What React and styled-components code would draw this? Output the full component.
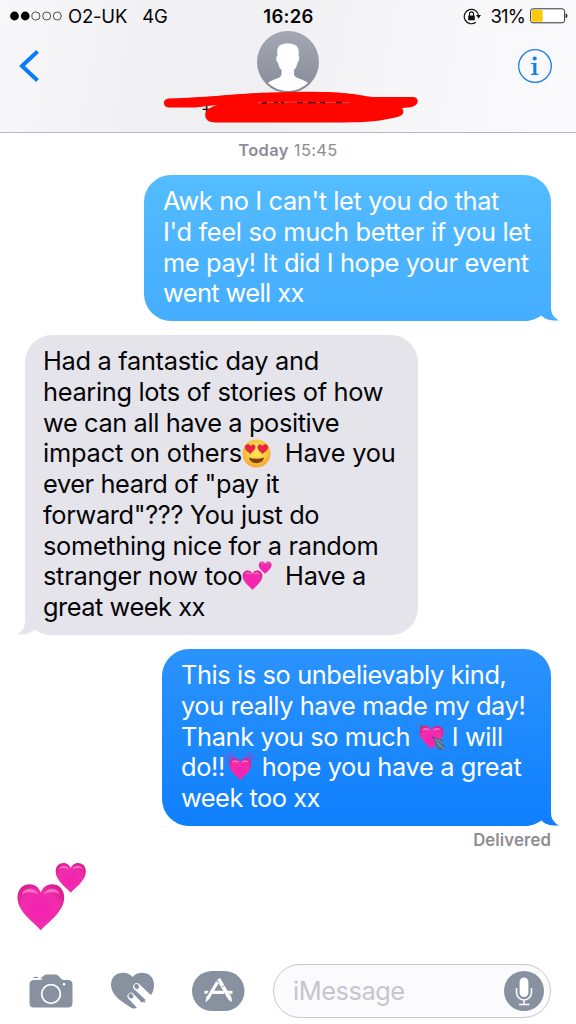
import { useId } from "react";
import styled, { createGlobalStyle, css } from "styled-components";

const GlobalStyle = createGlobalStyle`
    * {
        box-sizing: border-box;
    }

    body {
        margin: 0;
        background-color: #fff;
        font-family: Inter, "Liberation Sans", sans-serif;
        color: #050508;
    }

    svg {
        display: block;
        flex-shrink: 0;
    }
`
const Screen = styled.div`
    width: 576px;
    height: 1024px;
    display: flex;
    flex-direction: column;
    overflow: hidden;
    background-color: #fff;
`
const Header = styled.header`
    position: relative;
    height: 133px;
    border-bottom: 1px solid #b9b8bc;
    background: linear-gradient(100deg, #f8f7fa 0%, #f0eff2 28%, #f0eff2 48%, #f7f6f9 72%, #faf9fb 100%);
`
const StatusBar = styled.div`
    height: 31px;
    display: grid;
    grid-template-columns: 1fr auto 1fr;
    align-items: center;
    padding: 1px 8px 0 9px;
    font-size: 18.5px;
`
const Carrier = styled.div`
    display: flex;
    align-items: center;

    span {
        margin-left: 6px;
        letter-spacing: -0.2px;
    }

    span + span {
        margin-left: 15px;
    }
`
const Clock = styled.div`
    font-size: 18.5px;
    font-weight: 600;
    letter-spacing: 0.3px;
`
const Power = styled.div`
    display: flex;
    align-items: center;
    justify-content: flex-end;
    letter-spacing: -0.9px;

    span {
        margin: 0 5px 0 10px;
    }
`
const NavRow = styled.div`
    height: 62px;
    display: grid;
    grid-template-columns: 1fr auto 1fr;
    padding: 0 18px;

    > :last-child {
        justify-self: end;
        margin-right: 6px;
    }
`
const NavIcon = styled.div`
    padding-top: ${props => props.$top}px;
`
const ContactName = styled.div`
    padding-left: 201px;
    font-size: 17px;
    line-height: 26px;
    height: 26px;
    margin-top: 2px;
`
const Scribble = styled.svg`
    position: absolute;
    left: 160px;
    top: 90px;
`
const Thread = styled.main`
    height: 815px;
    display: flex;
    flex-direction: column;
    padding: 8px 25px 0;
`
const DateLabel = styled.div`
    height: 19px;
    margin-bottom: 15px;
    text-align: center;
    font-size: 16.5px;
    line-height: 19px;
    letter-spacing: 0.35px;
    color: #8e8d93;

    b {
        font-weight: 600;
    }
`
const tones = {
    light: css`
        background: linear-gradient(#54bcff, #44adff);
        color: #fff;
    `,
    grey: css`
        background: #e6e4eb;
        color: #050508;
    `,
    blue: css`
        background: linear-gradient(#2b93fd, #0f7ffd);
        color: #fff;
    `
};

const Bubble = styled.div`
    position: relative;
    align-self: ${props => (props.$sent ? "flex-end" : "flex-start")};
    width: ${props => props.$width}px;
    height: ${props => props.$height}px;
    margin-bottom: 14px;
    padding: 11px 0 0 ${props => (props.$sent ? 19 : 18)}px;
    border-radius: 27px;
    font-size: 25.4px;
    line-height: 30.75px;
    ${props => tones[props.$tone]}
`
const Line = styled.div`
    display: flex;
    height: 30.75px;
    white-space: pre;
    letter-spacing: ${props => props.$track}px;
`
const Tail = styled.svg`
    position: absolute;
    bottom: 0;
    ${props => (props.$sent ? "right: -8px;" : "left: -8px; transform: scaleX(-1);")}
`
const Emoji = styled.span`
    width: ${props => props.$width || 30}px;
    padding-top: ${props => props.$top || 0}px;
    flex-shrink: 0;
`
const Delivered = styled.div`
    align-self: flex-end;
    margin-top: -9px;
    height: 19px;
    font-size: 16.8px;
    line-height: 19px;
    font-weight: 600;
    letter-spacing: 0.1px;
    color: #8e8d93;
`
const BigEmoji = styled.div`
    margin: 12px 0 0 -9px;
`
const Toolbar = styled.footer`
    height: 76px;
    display: flex;
    align-items: flex-start;
    padding: 16px 25px 0 29px;
`
const AppIcons = styled.div`
    height: 53px;
    width: 244px;
    display: flex;
    align-items: center;
`
const IconSlot = styled.div`
    width: ${props => props.$width}px;
`
const Field = styled.div`
    flex: 1;
    height: 54px;
    display: flex;
    align-items: center;
    justify-content: space-between;
    padding: 0 6px 1px 19px;
    border: 1.5px solid #c8c7cc;
    border-radius: 27px;
    background-color: #fbfafd;
    font-size: 25.4px;
    letter-spacing: -0.45px;
    color: #c7c6cc;
`

const HEART = "M50 98 C42 85 2 62 2 30 C2 12 14 3 27 3 C39 3 47 11 50 20 C53 11 61 3 73 3 C86 3 98 12 98 30 C98 62 58 85 50 98Z"

function Heart({ x, y, size, id }) {
    return (
        <g transform={`translate(${x} ${y}) scale(${size / 100})`}>
            <path d={HEART} fill={`url(#${id})`} />
            <path d="M11 24 C15 9 38 7 44 24 C36 19 21 17 11 24Z M56 24 C62 7 85 9 89 24 C79 17 64 19 56 24Z" fill="#ff9fe0" opacity="0.6" />
        </g>
    )
}

function PinkFill({ id }) {
    return (
        <defs>
            <radialGradient id={id} cx="0.48" cy="0.56" r="0.58">
                <stop offset="0" stopColor="#f51fb2" />
                <stop offset="0.7" stopColor="#ef2eac" />
                <stop offset="1" stopColor="#dc1f94" />
            </radialGradient>
        </defs>
    )
}

function TwoHearts({ width }) {
    const id = useId()
    return (
        <svg width={width} height={width} viewBox="0 0 70 70">
            <PinkFill id={id} />
            <Heart x={0.5} y={20.5} size={48} id={id} />
            <Heart x={38.5} y={0} size={31} id={id} />
        </svg>
    )
}

function HeartEyes() {
    const id = useId()
    return (
        <svg width="29" height="29" viewBox="0 0 58 58">
            <defs>
                <radialGradient id={id} cx="0.5" cy="0.4" r="0.6">
                    <stop offset="0.3" stopColor="#ffe052" />
                    <stop offset="1" stopColor="#f5a62b" />
                </radialGradient>
            </defs>
            <circle cx="29" cy="29" r="28" fill={`url(#${id})`} />
            <path d="M17 30 C12 25 5 22 6 15 C7 9 15 9 17 14 C20 9 27 10 27 16 C27 22 20 25 17 30Z M41 30 C36 25 31 22 31 16 C31 10 38 9 41 14 C43 9 51 9 52 15 C53 22 46 25 41 30Z" fill="#e8243f" />
            <path d="M14 37 Q29 42 44 37 C42 52 16 52 14 37Z" fill="#80400e" />
        </svg>
    )
}

function ArrowHeart() {
    const id = useId()
    return (
        <svg width="29" height="29" viewBox="0 0 58 58">
            <PinkFill id={id} />
            <path d="M2 2 L10 5 L16 13 L11 17 L3 10Z" fill="#537fae" />
            <path d="M8 8 L18 18" stroke="#27548a" strokeWidth="3" />
            <Heart x={4} y={6} size={50} id={id} />
            <path d="M31 30 L48 43" stroke="#315375" strokeWidth="3" />
            <path d="M35 31 L50 35 L56 54 L44 56 L36 45Z" fill="#496a88" />
            <path d="M36 33 L53 54 M43 35 L51 44 M39 42 L47 50" stroke="#79a8cb" strokeWidth="2" fill="none" />
        </svg>
    )
}

function BeatingHeart() {
    const id = useId()
    return (
        <svg width="30" height="29" viewBox="0 0 60 58">
            <PinkFill id={id} />
            <g fill="none" stroke="#8a50d0" strokeWidth="3" strokeLinecap="round">
                <path d="M4 16 C3 8 8 3 16 3 M9 18 C9 12 13 8 20 9" />
                <path d="M56 16 C57 8 52 3 44 3 M51 18 C51 12 47 8 40 9" />
            </g>
            <Heart x={7.5} y={11} size={46} id={id} />
        </svg>
    )
}

function BubbleTail({ sent, from, to }) {
    const id = useId()
    return (
        <Tail $sent={sent} width="48" height="27" viewBox="0 0 48 27">
            <defs>
                <linearGradient id={id} x1="0" y1="0" x2="0" y2="27" gradientUnits="userSpaceOnUse">
                    <stop offset="0" stopColor={from} />
                    <stop offset="1" stopColor={to} />
                </linearGradient>
            </defs>
            <path d="M40 0 V13 C40 19 42 23 48 26.500 C40 27 34 25.500 30.500 21.500 C26 24.500 20 27 13 27 L13 25 C26 25 38 15 38 0Z" fill={`url(#${id})`} />
        </Tail>
    )
}

function SignalDots() {
    return (
        <svg width="53" height="12" viewBox="0 0 53 12">
            {[0, 1, 2, 3, 4].map(i => (
                <circle key={i} cx={5.5 + i * 10.7} cy="6" r={i < 2 ? 4.4 : 4} fill={i < 2 ? "#000" : "none"} stroke={i < 2 ? "none" : "#222"} strokeWidth="0.8" />
            ))}
        </svg>
    )
}

function RotationLock() {
    return (
        <svg width="18" height="17" viewBox="0 0 18 17">
            <path d="M15.600 7.500 A7.200 7.200 0 1 0 12.800 14.300" fill="none" stroke="#111" strokeWidth="1.200" />
            <path d="M13 7 H18 L15.600 10.500Z" fill="#111" />
            <rect x="5.200" y="7.500" width="6.600" height="4.700" rx="0.500" fill="#111" />
            <path d="M6.500 8 V6 A2 2.100 0 0 1 10.500 6 V8" fill="none" stroke="#111" strokeWidth="1.100" />
        </svg>
    )
}

function Battery() {
    return (
        <svg width="38" height="16" viewBox="0 0 38 16">
            <rect x="0.600" y="0.800" width="34" height="14" rx="2.500" fill="#fff" stroke="#333" strokeWidth="1" />
            <rect x="1.700" y="1.900" width="11" height="11.800" rx="1" fill="#ffc90b" />
            <path d="M35.700 5.500 C38 6 38 9.500 35.700 10.200Z" fill="#222" />
        </svg>
    )
}

function Avatar() {
    const id = useId()
    return (
        <svg width="62" height="62" viewBox="0 0 62 62">
            <defs>
                <linearGradient id={id} x2="0" y2="1">
                    <stop offset="0" stopColor="#a3a8b4" />
                    <stop offset="1" stopColor="#868b98" />
                </linearGradient>
            </defs>
            <circle cx="31" cy="31" r="31" fill={`url(#${id})`} />
            <path d="M11 52 C15 48 23 48 24.500 44 L24.500 39 C22 37 21.500 34 21 31.500 C18.500 30 19 25 20.500 24.500 C19 15 23 12.500 31 12.500 C39 12.500 43 16 41.500 24.500 C43 26 42 31 40.500 31.500 C40 35 39 37 37 39 L37 44 C39 48 47 48 51 52 A29 29 0 0 1 11 52Z" fill="#fff" />
        </svg>
    )
}

function CameraIcon() {
    return (
        <svg width="44" height="34" viewBox="0 0 44 34">
            <path d="M4 4.500 H11 L15 1.500 Q16 0.500 17.500 0.500 H26.500 Q28 0.500 29 1.500 L32.500 5 Q33.500 6 35 6 H39 Q43.500 6 43.500 10.500 V29 Q43.500 33.500 39 33.500 H5 Q0.500 33.500 0.500 29 V10.500 Q0.500 6 5 6 H10 Q12.500 6 14 4.500Z" fill="#8791a0" />
            <path d="M0 5 H11" stroke="#fff" strokeWidth="1" />
            <path d="M4.500 3.500 H9" stroke="#8791a0" strokeWidth="1.200" />
            <circle cx="22" cy="20" r="9.300" fill="none" stroke="#fff" strokeWidth="1.800" />
            <circle cx="35" cy="10.300" r="1.300" fill="#fff" />
        </svg>
    )
}

function TouchIcon() {
    return (
        <svg width="44" height="38" viewBox="0 0 44 38">
            <path d="M21.500 5 C27-2 43-1 43 13 C43 17 42 20 40 23 L25 36 Q22 37.500 19 35 C11 30 0 23 0 13 C0-1 16-2 21.500 5Z" fill="#8791a0" />
            <g stroke="#fff" strokeLinecap="round">
                <path d="M20 24.300 L33 38" strokeWidth="7" />
                <path d="M25.700 14.700 L42 30" strokeWidth="7.200" />
            </g>
            <path d="M23.500 20.500 L33.500 29.500" stroke="#8791a0" strokeWidth="1.700" strokeLinecap="round" />
            <rect x="-2.200" y="-2.700" width="4.400" height="5.200" rx="2" transform="translate(20 24) rotate(-42)" fill="#8791a0" />
            <rect x="-2.200" y="-2.700" width="4.400" height="5.200" rx="2" transform="translate(25.700 14.500) rotate(-42)" fill="#8791a0" />
        </svg>
    )
}

function AppStoreIcon() {
    return (
        <svg width="53" height="40" viewBox="0 0 53 40">
            <rect width="52.500" height="40" rx="20" fill="#8791a0" />
            <path d="M12.500 21.300 H40.500" stroke="#fff" strokeWidth="3" />
            <g fill="none" stroke="#8791a0" strokeWidth="6">
                <path d="M26 9 L15 29 M25 8 L37 28" />
            </g>
            <path d="M20 21.300 H32" stroke="#fff" strokeWidth="3" />
            <path d="M25.500 11 L16 27" stroke="#fff" strokeWidth="3.200" />
            <path d="M26.500 8 L37 26" stroke="#fff" strokeWidth="3.800" />
            <path d="M24 9.500 L27 11.200 M29.500 16 L33.500 14" stroke="#8791a0" strokeWidth="0.800" />
            <path d="M14.500 25 L18 27 L13.500 31.500Z M34.500 25.500 L38 23.800 Q40.500 27 39.500 31 Q36 29 34.500 25.500Z" fill="#fff" />
        </svg>
    )
}

function MicIcon() {
    return (
        <svg width="40" height="40" viewBox="0 0 40 40">
            <circle cx="20" cy="20" r="20" fill="#8791a0" />
            <rect x="15.600" y="6.500" width="8.800" height="19.500" rx="4.400" fill="#fff" />
            <path d="M12.500 17 V21.500 A7.500 7.500 0 0 0 27.500 21.500 V17 M20 29 V33.500 M15 33.500 H25.500" fill="none" stroke="#fff" strokeWidth="1.500" />
        </svg>
    )
}

function App() {
    return (
        <Screen>
            <GlobalStyle />
            <Header>
                <StatusBar>
                    <Carrier>
                        <SignalDots />
                        <span>O2-UK</span>
                        <span>4G</span>
                    </Carrier>
                    <Clock>16:26</Clock>
                    <Power>
                        <RotationLock />
                        <span>31%</span>
                        <Battery />
                    </Power>
                </StatusBar>
                <NavRow>
                    <NavIcon $top={19}>
                        <svg width="22" height="32" viewBox="0 0 22 32">
                            <path d="M19.500 1.500 L4 16 L19.500 30.500" fill="none" stroke="#0a7cf8" strokeWidth="4" />
                        </svg>
                    </NavIcon>
                    <Avatar />
                    <NavIcon $top={18}>
                        <svg width="34" height="34" viewBox="0 0 34 34">
                            <circle cx="17" cy="17" r="16.300" fill="none" stroke="#167ee6" strokeWidth="1.300" />
                            <circle cx="16.700" cy="9.500" r="2.100" fill="#167ee6" />
                            <path d="M12.800 14.200 L18.400 13.700 V24.500 L20.500 25 V26 H13 V25 L15.300 24.500 V15.200 L12.800 15Z" fill="#167ee6" />
                        </svg>
                    </NavIcon>
                </NavRow>
                <ContactName>+</ContactName>
                <Scribble width="262" height="36" viewBox="0 0 262 36">
                    <path d="M9 8.500 C60 7 80 2.500 128 2 C190 1 195 5 212 7 H253 C260 7 260 16.500 248 17.500 L242 18 C246 24 241 27 233 28 C215 32 200 32.500 175 32.500 H55 C43 32 42 21 52 17 C54 16 56 15.500 57 15 L35 17.500 H9 C2 17 2 9 9 8.500Z" fill="#ff0500" />
                    <path d="M97 12.700 L142 12 L190 12.700" fill="none" stroke="#ff5a55" strokeWidth="0.700" />
                    <path d="M102 13 H107 M114 12.500 H118 M121 12.500 H124 M137 12.500 H143 M148 12.500 H156 M160 12.500 H165 M176 12.500 H182" stroke="#400" strokeWidth="1.500" />
                </Scribble>
            </Header>
            <Thread>
                <DateLabel><b>Today</b> 15:45</DateLabel>

                <Bubble $sent $tone="light" $width={407} $height={146}>
                    <BubbleTail sent from="#47b0ff" to="#44adff" />
                    <Line $track={-0.38}>Awk no I can't let you do that</Line>
                    <Line $track={-0.32}>I'd feel so much better if you let</Line>
                    <Line $track={-0.39}>me pay! It did I hope your event</Line>
                    <Line $track={-0.6}>went well xx</Line>
                </Bubble>

                <Bubble $tone="grey" $width={393} $height={300}>
                    <BubbleTail from="#e6e4eb" to="#e6e4eb" />
                    <Line $track={-0.32}>Had a fantastic day and</Line>
                    <Line $track={-0.34}>hearing lots of stories of how</Line>
                    <Line $track={-0.4}>we can all have a positive</Line>
                    <Line $track={-0.2}>impact on others<Emoji $width={29} $top={1}><HeartEyes /></Emoji>{"  Have you"}</Line>
                    <Line $track={-0.42}>ever heard of "pay it</Line>
                    <Line $track={-0.37}>forward"??? You just do</Line>
                    <Line $track={-0.33}>something nice for a random</Line>
                    <Line $track={-0.28}>stranger now too<Emoji $width={29}><TwoHearts width={30} /></Emoji>{"  Have a"}</Line>
                    <Line $track={-0.48}>great week xx</Line>
                </Bubble>

                <Bubble $sent $tone="blue" $width={389} $height={177}>
                    <BubbleTail sent from="#1383fd" to="#0f7ffd" />
                    <Line $track={-0.4}>This is so unbelievably kind,</Line>
                    <Line $track={-0.43}>you really have made my day!</Line>
                    <Line $track={-0.37}>{"Thank you so much "}<Emoji $width={28}><ArrowHeart /></Emoji>{" I will"}</Line>
                    <Line $track={-0.36}>do!!<Emoji $width={30}><BeatingHeart /></Emoji>{" hope you have a great"}</Line>
                    <Line $track={-0.5}>week too xx</Line>
                </Bubble>
                <Delivered>Delivered</Delivered>

                <BigEmoji>
                    <TwoHearts width={71} />
                </BigEmoji>
            </Thread>
            <Toolbar>
                <AppIcons>
                    <IconSlot $width={82}><CameraIcon /></IconSlot>
                    <IconSlot $width={81}><TouchIcon /></IconSlot>
                    <IconSlot $width={53}><AppStoreIcon /></IconSlot>
                </AppIcons>
                <Field>
                    iMessage
                    <MicIcon />
                </Field>
            </Toolbar>
        </Screen>
    )
}

export default App;
